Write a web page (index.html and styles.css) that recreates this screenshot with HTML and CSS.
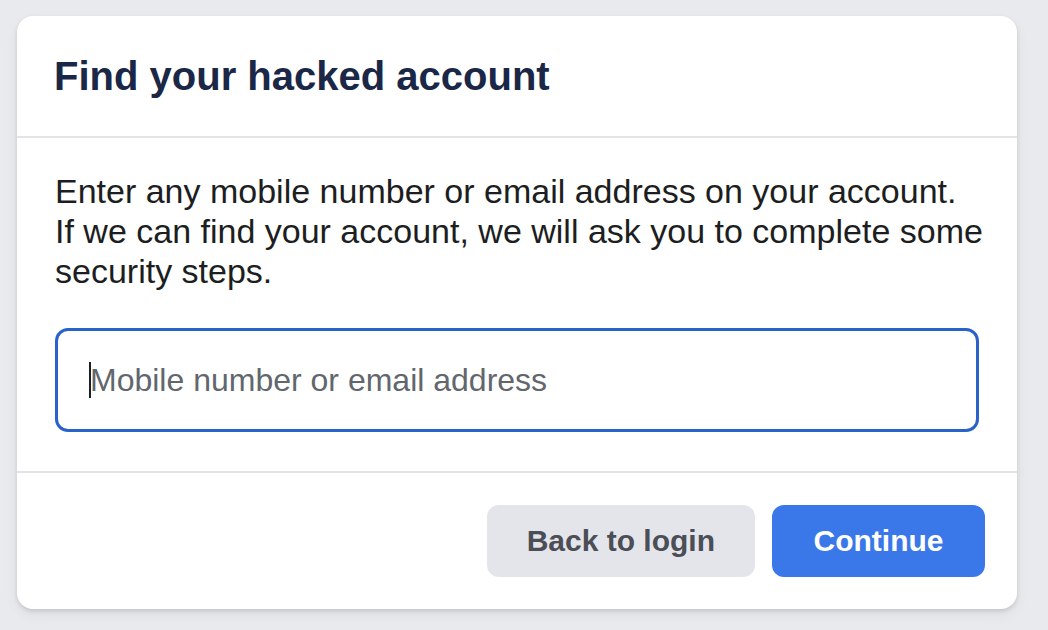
FILE: index.html
```html
<!DOCTYPE html>
<html lang="en">
<head>
<meta charset="utf-8">
<title>Find your hacked account</title>
<link rel="stylesheet" href="styles.css">
</head>
<body>
<div class="page">
  <div class="card">
    <div class="card-header">
      <h2 class="title">Find your hacked account</h2>
    </div>
    <div class="card-body">
      <p class="intro">Enter any mobile number or email address on your account.<br>If we can find your account, we will ask you to complete some security steps.</p>
      <div class="field">
        <input class="field-input" type="text" placeholder="Mobile number or email address">
        <span class="caret"></span>
      </div>
    </div>
    <div class="card-footer">
      <button class="btn btn-secondary" type="button">Back to login</button>
      <button class="btn btn-primary" type="button">Continue</button>
    </div>
  </div>
</div>
</body>
</html>
```

FILE: styles.css
```css
html, body {
  margin: 0;
  padding: 0;
  background: #e9eaee;
}

body {
  font-family: "Liberation Sans", Arial, Helvetica, sans-serif;
  width: 1048px;
  height: 630px;
  overflow: hidden;
}

.page {
  padding: 16px 0 0 17px;
}

.card {
  width: 1000px;
  background: #ffffff;
  border-radius: 16px;
  box-shadow: 0 2px 4px rgba(0, 0, 0, 0.12), 0 6px 14px rgba(0, 0, 0, 0.05);
  overflow: hidden;
}

.card-header {
  padding: 36px 36px 36px 37px;
  border-bottom: 2px solid #e3e4e7;
}

.title {
  margin: 0;
  font-size: 40px;
  line-height: 48px;
  font-weight: 700;
  color: #1a2746;
}

.card-body {
  padding: 33px 36px 39px;
  border-bottom: 2px solid #e3e4e7;
}

.intro {
  margin: 0 -10px 0 2px;
  font-size: 34px;
  line-height: 40px;
  color: #1c1e21;
}

.field {
  position: relative;
  margin: 37px 2px 0;
}

.field-input {
  display: block;
  box-sizing: border-box;
  width: 100%;
  height: 104px;
  margin: 0;
  padding: 0 20px 0 32px;
  border: 3px solid #2a62cb;
  border-radius: 13px;
  outline: none;
  background: #ffffff;
  font-family: "Liberation Sans", Arial, Helvetica, sans-serif;
  font-size: 32px;
  color: #1c1e21;
}

.field-input::placeholder {
  color: #62666d;
  opacity: 1;
}

.caret {
  position: absolute;
  left: 34px;
  top: 34px;
  width: 2px;
  height: 36px;
  background: #1c1e21;
}

.card-footer {
  display: flex;
  justify-content: flex-end;
  gap: 17px;
  padding: 32px 32px 32px;
}

.btn {
  height: 72px;
  padding: 0 40px;
  border: none;
  border-radius: 12px;
  font-family: "Liberation Sans", Arial, Helvetica, sans-serif;
  font-size: 30px;
  font-weight: 700;
  cursor: pointer;
}

.btn-secondary {
  background: #e4e5ea;
  color: #4b4e56;
}

.btn-primary {
  padding: 0 41.5px;
  background: #3a77e9;
  color: #ffffff;
}
```
